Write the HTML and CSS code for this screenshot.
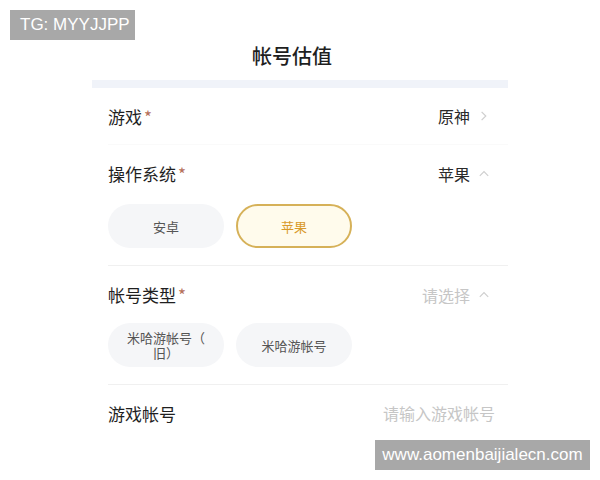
FILE: index.html
```html
<!DOCTYPE html>
<html lang="zh-CN">
<head>
    <meta charset="UTF-8">
    <meta name="viewport" content="width=device-width, initial-scale=1.0">
    <title>帐号估值</title>
    <link rel="stylesheet" href="styles.css">
</head>
<body>
    <div class="mark mark-tg">TG: MYYJJPP</div>

    <div class="page">
        <h1 class="title">帐号估值</h1>
        <div class="band"></div>

        <div class="form">
            <!-- game -->
            <div class="row row-thin">
                <span class="label">游戏<i class="req">*</i></span>
                <span class="value">原神
                    <svg class="chev" viewBox="0 0 10 10"><path d="M3 1.5 6.5 5 3 8.5"/></svg>
                </span>
            </div>

            <!-- os -->
            <div class="group">
                <div class="row">
                    <span class="label">操作系统<i class="req">*</i></span>
                    <span class="value">苹果
                        <svg class="chev" viewBox="0 0 10 10"><path d="M1.5 6.5 5 3 8.5 6.5"/></svg>
                    </span>
                </div>
                <div class="chips">
                    <div class="chip">安卓</div>
                    <div class="chip chip-on">苹果</div>
                </div>
            </div>

            <!-- account type -->
            <div class="group">
                <div class="row">
                    <span class="label">帐号类型<i class="req">*</i></span>
                    <span class="value value-muted">请选择
                        <svg class="chev" viewBox="0 0 10 10"><path d="M1.5 6.5 5 3 8.5 6.5"/></svg>
                    </span>
                </div>
                <div class="chips">
                    <div class="chip chip-wrap">米哈游帐号（旧）</div>
                    <div class="chip">米哈游帐号</div>
                </div>
            </div>

            <!-- account input -->
            <div class="row row-last">
                <span class="label">游戏帐号</span>
                <span class="value value-muted value-input">请输入游戏帐号</span>
            </div>
        </div>
    </div>

    <div class="mark mark-site">www.aomenbaijialecn.com</div>
</body>
</html>
```

FILE: styles.css
```css
/* page base */
body {
    margin: 0;
    width: 600px;
    height: 480px;
    overflow: hidden;
    background: #fff;
    font-family: "Noto Sans CJK SC", "Noto Sans", sans-serif;
    color: #1f1f1f;
}

/* grey watermarks laid over the screenshot */
.mark {
    position: absolute;
    background: #a8a8a8;
    color: #fff;
    font-family: "Liberation Sans", Arial, sans-serif;
    font-size: 17px;
    line-height: 30px;
}

.mark-tg {
    left: 10px;
    top: 10px;
    width: 125px;
    padding-left: 10px;
    box-sizing: border-box;
}

.mark-site {
    left: 375px;
    top: 440px;
    width: 215px;
    text-align: center;
}

.page {
    width: 416px;
    margin-left: 92px;
}

.title {
    margin: 0;
    padding: 42px 16px 0 0;
    height: 38px;
    text-align: center;
    font-size: 20px;
    font-weight: 500;
    line-height: 28px;
}

.band {
    height: 8px;
    background: #f0f3f9;
}

.form {
    padding-left: 16px;
}

.row {
    display: flex;
    align-items: center;
    justify-content: space-between;
    height: 57px;
    padding-right: 18px;
}

.row-thin {
    border-bottom: 1px solid #fafafa;
    height: 56px;
}

.label {
    font-size: 17px;
}

.req {
    font-style: normal;
    color: #b5705a;
    margin-left: 2px;
}

.value {
    display: flex;
    align-items: center;
    font-size: 16px;
    color: #2a2a2a;
}

.value-muted {
    color: #c6c6c6;
}

.value-input {
    margin-right: -5px;
}

.chev {
    width: 12px;
    height: 12px;
    margin-left: 8px;
    fill: none;
    stroke: #cfcfcf;
    stroke-width: 1;
}

.group {
    border-bottom: 1px solid #f0f0f0;
    padding-bottom: 17px;
}

.chips {
    display: flex;
    gap: 12px;
    margin-top: 2px;
}

.chip {
    width: 116px;
    height: 44px;
    box-sizing: border-box;
    padding: 0 16px;
    border-radius: 22px;
    background: #f5f6f8;
    display: flex;
    align-items: center;
    justify-content: center;
    text-align: center;
    font-size: 13px;
    line-height: 15px;
    color: #555;
}

.chip-wrap {
    line-break: anywhere;
    padding: 0 14px;
}

.chip-on {
    background: #fffbec;
    border: 2px solid #d6b158;
    color: #d99a2b;
}

.group + .group .chips {
    margin-top: 0;
}

.row-last {
    height: 56px;
}
```
